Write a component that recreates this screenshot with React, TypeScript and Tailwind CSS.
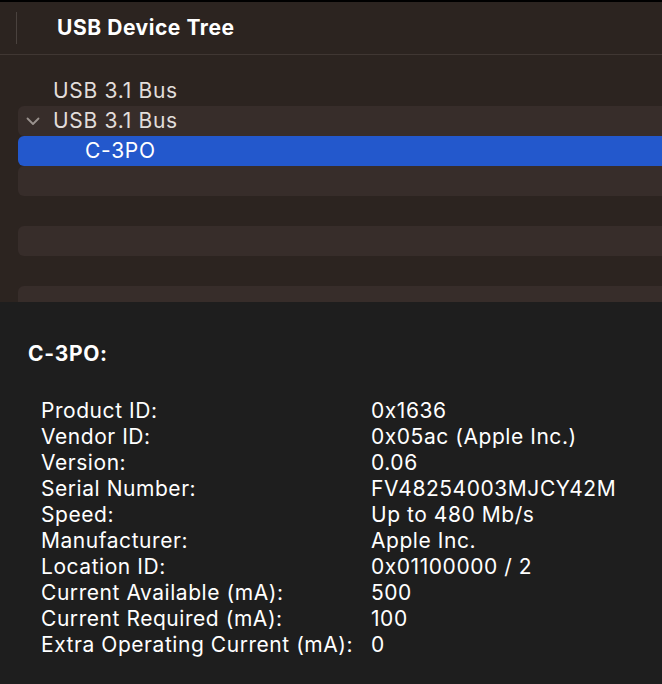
import React from "react"

const details: [string, string][] = [
  ["Product ID:", "0x1636"],
  ["Vendor ID:", "0x05ac (Apple Inc.)"],
  ["Version:", "0.06"],
  ["Serial Number:", "FV48254003MJCY42M"],
  ["Speed:", "Up to 480 Mb/s"],
  ["Manufacturer:", "Apple Inc."],
  ["Location ID:", "0x01100000 / 2"],
  ["Current Available (mA):", "500"],
  ["Current Required (mA):", "100"],
  ["Extra Operating Current (mA):", "0"],
]

function Chevron() {
  return (
    <svg width="14" height="9" viewBox="0 0 14 9" className="text-[#9a928e]">
      <path d="M1.5 1.5 L7 7 L12.5 1.5" fill="none" stroke="currentColor" strokeWidth="1.8" strokeLinecap="round" strokeLinejoin="round" />
    </svg>
  )
}

export default function App() {
  return (
    <div className="w-[662px] h-[684px] overflow-hidden bg-[#1e1e1e]" style={{ fontFamily: "Inter, 'Liberation Sans', sans-serif" }}>
      {/* tree pane */}
      <div className="h-[302px] overflow-hidden bg-[#2c2420] border-t-2 border-black">
        <div className="h-[53px] flex items-center border-b border-[#403733]">
          <div className="ml-[16px] w-px h-[32px] bg-[#4a423e]" />
          <div className="ml-[40px] text-[21px] font-bold text-white tracking-[0.55px]">USB Device Tree</div>
        </div>
        <div className="pt-[21px] text-[21px] text-[#e2dedb] tracking-[0.7px]">
          <div className="h-[30px] ml-[18px] flex items-center pl-[35px]">USB 3.1 Bus</div>
          <div className="h-[30px] ml-[18px] flex items-center rounded-l-md bg-[#372d2a] pl-[8px]">
            <Chevron />
            <span className="ml-[13px]">USB 3.1 Bus</span>
          </div>
          <div className="h-[30px] ml-[18px] flex items-center rounded-l-md bg-[#2358cc] pl-[67px] text-white">C-3PO</div>
          <div className="h-[30px] ml-[18px] rounded-l-md bg-[#372d2a]" />
          <div className="h-[30px] ml-[18px]" />
          <div className="h-[30px] ml-[18px] rounded-l-md bg-[#372d2a]" />
          <div className="h-[30px] ml-[18px]" />
          <div className="h-[30px] ml-[18px] rounded-l-md bg-[#372d2a]" />
        </div>
      </div>
      {/* detail pane */}
      <div className="pt-[41px] pl-[28px] text-white">
        <div className="text-[21px] font-bold leading-[22px] tracking-[0.7px]">C-3PO:</div>
        <div className="mt-[33px] pl-[13px] text-[21px] leading-[26px] tracking-[0.55px]">
          {details.map(([k, v]) => (
            <div key={k} className="flex">
              <div className="w-[330px]">{k}</div>
              <div>{v}</div>
            </div>
          ))}
        </div>
      </div>
    </div>
  )
}
